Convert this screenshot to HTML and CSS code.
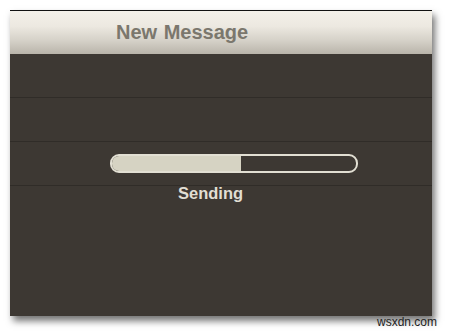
FILE: index.html
```html
<!DOCTYPE html>
<html lang="en">
<head>
  <meta charset="UTF-8">
  <title>New Message</title>
  <link rel="stylesheet" href="styles.css">
</head>
<body>
<div class="screen">
  <div class="header">
    <h1 class="title">New Message</h1>
  </div>
  <div class="content">
    <div class="row"></div>
    <div class="row"></div>
    <div class="row"></div>
    <div class="sending">
      <div class="progress">
        <span class="progress-fill" style="width: 53%"></span>
      </div>
      <p class="label">Sending</p>
    </div>
  </div>
</div>
<p class="mark">wsxdn.com</p>
</body>
</html>
```

FILE: styles.css
```css
* {
  margin: 0;
  padding: 0;
}
body {
  background: #fff;
  font-family: "Liberation Sans", Arial, sans-serif;
  width: 450px;
  height: 334px;
  overflow: hidden;
  position: relative;
}
.screen {
  width: 422px;
  height: 306px;
  margin: 10px 0 0 10px;
  background: #3d3833;
  box-shadow: 3px 5px 7px rgba(0, 0, 0, 0.55);
  display: flex;
  flex-direction: column;
}
.header {
  height: 43px;
  border-top: 1px solid #111;
  background: linear-gradient(#f3f0e9 0%, #ede9e1 35%, #d4d0c7 70%, #b9b4aa 100%);
  display: flex;
  align-items: center;
  padding-left: 106px;
}
.title {
  font-size: 20px;
  font-weight: bold;
  word-spacing: 1px;
  color: #7b776d;
}
.content {
  flex: 1;
  position: relative;
}
.row {
  height: 43px;
  border-bottom: 1px solid #302c28;
}
.sending {
  position: absolute;
  left: 100px;
  top: 100px;
  width: 248px;
}
.progress {
  height: 15px;
  border: 2px solid #e2dfd3;
  border-radius: 9px;
  overflow: hidden;
  background: #3d3833;
}
.progress-fill {
  display: block;
  height: 100%;
  background: #d6d3c3;
}
.label {
  margin: 11px 0 0 68px;
  font-size: 16.5px;
  font-weight: bold;
  color: #e1ded3;
}
.mark {
  position: absolute;
  left: 377px;
  top: 315px;
  font-size: 12px;
  color: #222;
}
```
